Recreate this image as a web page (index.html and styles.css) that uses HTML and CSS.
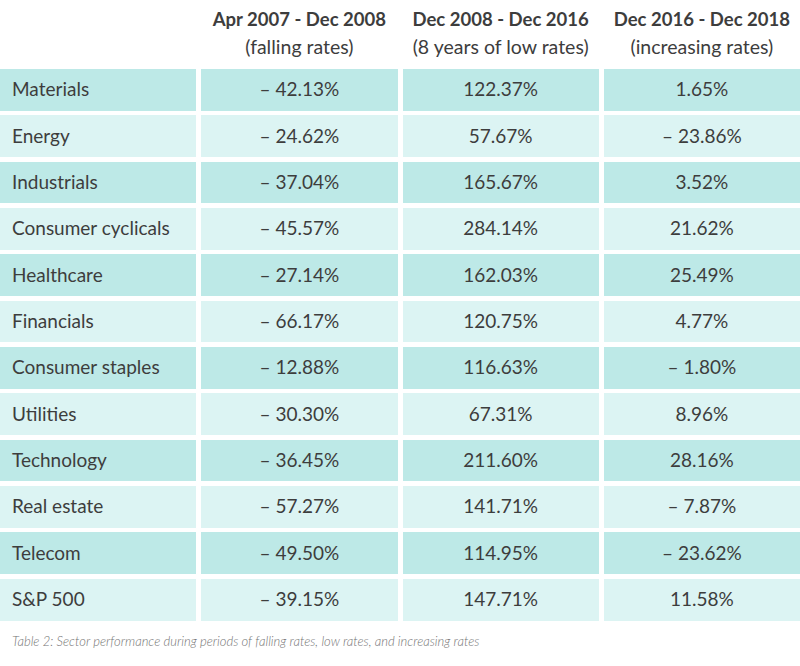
FILE: index.html
```html
<!DOCTYPE html>
<html>
<head>
<meta charset="utf-8">
<link rel="stylesheet" href="styles.css">
</head>
<body>
<div class="table">
  <div class="head"></div>
  <div class="head"><div class="h1">Apr 2007 - Dec 2008</div><div class="h2">(falling rates)</div></div>
  <div class="head"><div class="h1">Dec 2008 - Dec 2016</div><div class="h2">(8 years of low rates)</div></div>
  <div class="head"><div class="h1">Dec 2016 - Dec 2018</div><div class="h2">(increasing rates)</div></div>

  <div class="c name dark">Materials</div><div class="c dark">– 42.13%</div><div class="c dark">122.37%</div><div class="c dark">1.65%</div>
  <div class="c name light">Energy</div><div class="c light">– 24.62%</div><div class="c light">57.67%</div><div class="c light">– 23.86%</div>
  <div class="c name dark">Industrials</div><div class="c dark">– 37.04%</div><div class="c dark">165.67%</div><div class="c dark">3.52%</div>
  <div class="c name light">Consumer cyclicals</div><div class="c light">– 45.57%</div><div class="c light">284.14%</div><div class="c light">21.62%</div>
  <div class="c name dark">Healthcare</div><div class="c dark">– 27.14%</div><div class="c dark">162.03%</div><div class="c dark">25.49%</div>
  <div class="c name light">Financials</div><div class="c light">– 66.17%</div><div class="c light">120.75%</div><div class="c light">4.77%</div>
  <div class="c name dark">Consumer staples</div><div class="c dark">– 12.88%</div><div class="c dark">116.63%</div><div class="c dark">– 1.80%</div>
  <div class="c name light">Utilities</div><div class="c light">– 30.30%</div><div class="c light">67.31%</div><div class="c light">8.96%</div>
  <div class="c name dark">Technology</div><div class="c dark">– 36.45%</div><div class="c dark">211.60%</div><div class="c dark">28.16%</div>
  <div class="c name light">Real estate</div><div class="c light">– 57.27%</div><div class="c light">141.71%</div><div class="c light">– 7.87%</div>
  <div class="c name dark">Telecom</div><div class="c dark">– 49.50%</div><div class="c dark">114.95%</div><div class="c dark">– 23.62%</div>
  <div class="c name light">S&amp;P 500</div><div class="c light">– 39.15%</div><div class="c light">147.71%</div><div class="c light">11.58%</div>
</div>
<p class="caption">Table 2: Sector performance during periods of falling rates, low rates, and increasing rates</p>
</body>
</html>
```
FILE: styles.css
```css
html, body {
  margin: 0;
  padding: 0;
  background: #fff;
}
body {
  width: 800px;
  font-family: Lato, "Liberation Sans", sans-serif;
  color: #3d3d3d;
}
.table {
  display: grid;
  grid-template-columns: repeat(4, 1fr);
  grid-template-rows: 64.4px repeat(12, 41.76px);
  column-gap: 5px;
  row-gap: 4.6px;
}
.head {
  text-align: center;
  padding-top: 6px;
  line-height: 27px;
}
.h1 {
  font-weight: 700;
  font-size: 18.5px;
}
.h2 {
  font-weight: 400;
  font-size: 19.5px;
}
.c {
  display: flex;
  align-items: center;
  justify-content: center;
  font-size: 19px;
  padding-bottom: 2px;
  box-sizing: border-box;
}
.c.name {
  justify-content: flex-start;
  padding-left: 12px;
}
.dark {
  background: #bde9e7;
}
.light {
  background: #dcf4f3;
}
.caption {
  margin: 12px 0 0 12px;
  font-size: 13px;
  font-style: italic;
  font-weight: 300;
  color: #747474;
}
```
